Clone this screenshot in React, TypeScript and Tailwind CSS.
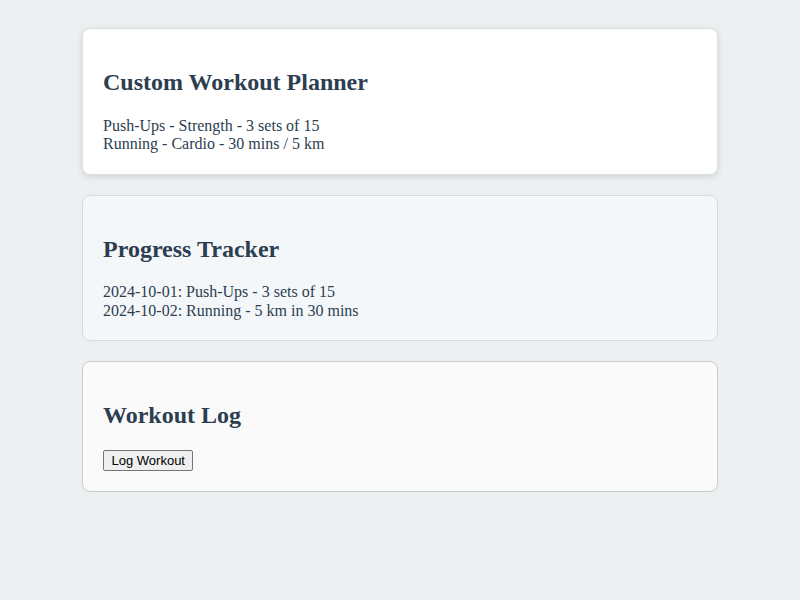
export default function App() {
  return (
    <main className="min-h-screen bg-[#ecf0f1] pt-[28px] font-['Liberation_Serif',serif] text-[#2c3e50]">
      <div className="mx-auto flex w-[636px] flex-col gap-[20px]">
        <section className="rounded-[8px] border border-[#dde1e3] bg-white p-[20px] shadow-[0_2px_6px_rgba(0,0,0,0.12)]">
          <h2 className="my-[20px] text-[24px] font-bold leading-[27.6px]">Custom Workout Planner</h2>
          <div className="text-[16px] leading-[18.5px]">
            <div>Push-Ups - Strength - 3 sets of 15</div>
            <div>Running - Cardio - 30 mins / 5 km</div>
          </div>
        </section>

        <section className="rounded-[8px] border border-[#d5d9dc] bg-[#f4f7f9] p-[20px]">
          <h2 className="my-[20px] text-[24px] font-bold leading-[27.6px]">Progress Tracker</h2>
          <div className="text-[16px] leading-[18.5px]">
            <div>2024-10-01: Push-Ups - 3 sets of 15</div>
            <div>2024-10-02: Running - 5 km in 30 mins</div>
          </div>
        </section>

        <section className="rounded-[8px] border border-[#cccccc] bg-[#fafafa] p-[20px]">
          <h2 className="my-[20px] text-[24px] font-bold leading-[27.6px]">Workout Log</h2>
          <button className="block rounded-[2px] border border-[#767676] bg-[#efefef] px-[7.5px] py-[1px] font-['Liberation_Sans',Arial,sans-serif] text-[13px] leading-[17px] text-black">
            Log Workout
          </button>
        </section>
      </div>
    </main>
  );
}
